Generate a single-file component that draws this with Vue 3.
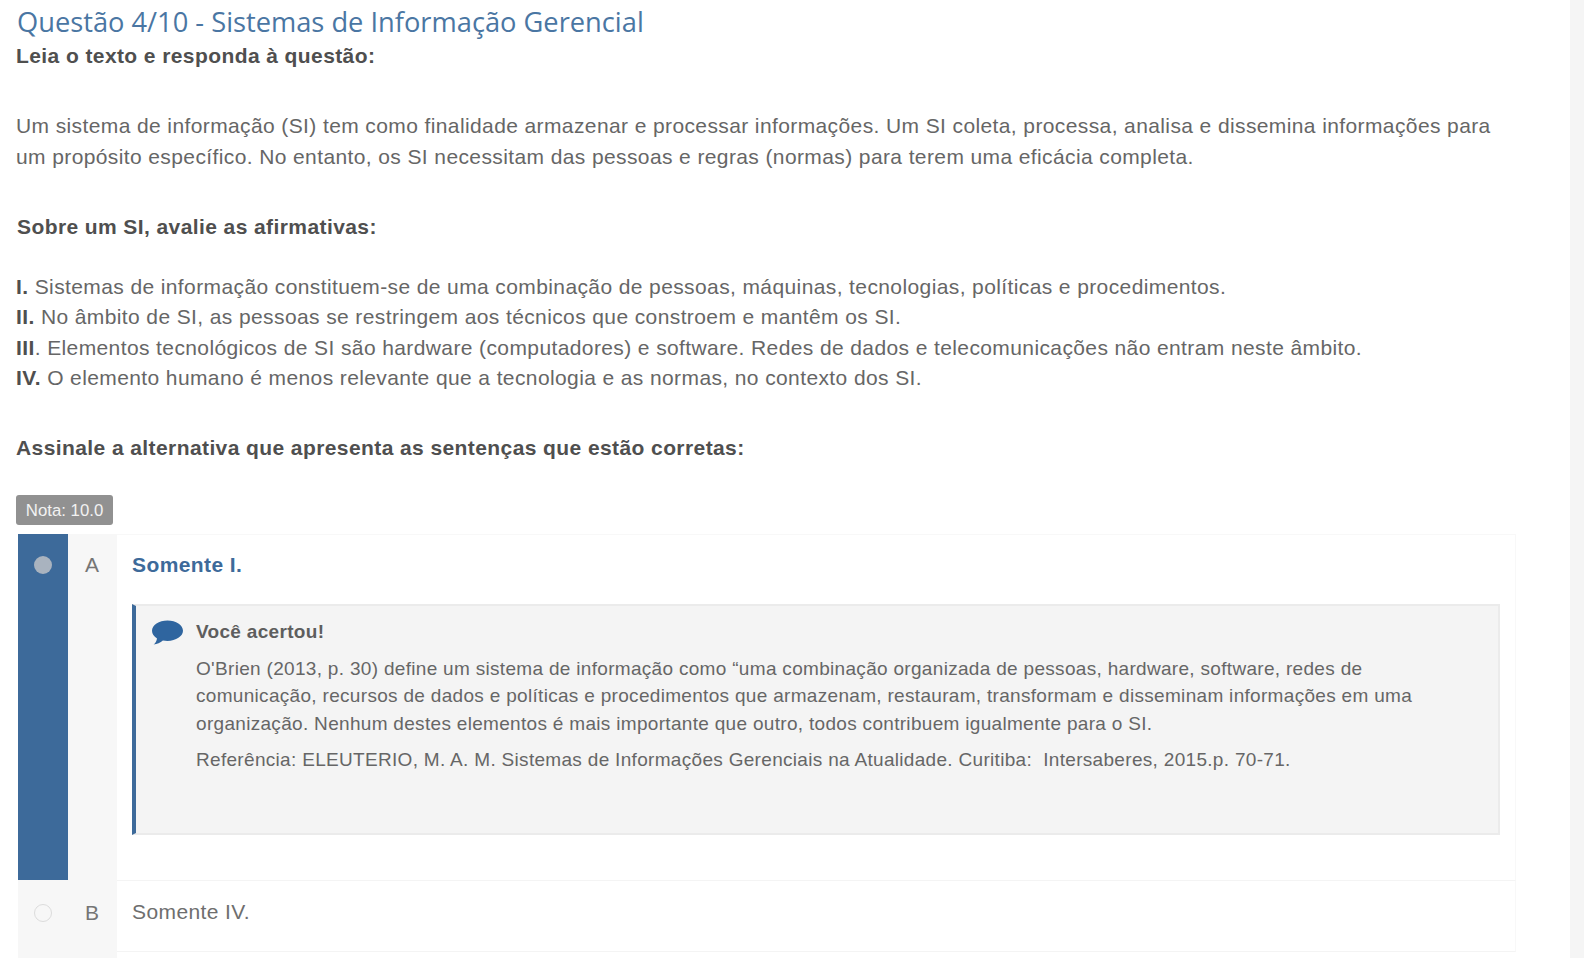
<template>
  <div class="page">
    <main class="content">
      <h1 class="title">Questão 4/10 - Sistemas de Informação Gerencial</h1>
      <div class="question">
        <p class="strong lead">Leia o texto e responda à questão:</p>
        <p class="intro">Um sistema de informação (SI) tem como finalidade armazenar e processar informações. Um SI coleta, processa, analisa e dissemina informações para<br />um propósito específico. No entanto, os SI necessitam das pessoas e regras (normas) para terem uma eficácia completa.</p>
        <p class="strong about">Sobre um SI, avalie as afirmativas:</p>
        <p class="claims">
          <template v-for="c in claims" :key="c.n">
            <b>{{ c.n }}</b>{{ c.t }}<br />
          </template>
        </p>
        <p class="strong ask">Assinale a alternativa que apresenta as sentenças que estão corretas:</p>
      </div>
      <span class="badge">Nota: 10.0</span>
      <div class="options">
        <div class="row selected">
          <div class="mark"><i class="radio"></i></div>
          <div class="letter">A</div>
          <div class="body">
            <div class="answer">Somente I.</div>
            <div class="comment">
              <svg class="bubble" viewBox="0 0 32 26" aria-hidden="true"><path d="M16.5 .5C8 .5 1 5 1 10.8c0 3 1.9 5.7 5 7.6-.3 2.300-1.700 4.700-3.400 6.100 3.400-.3 6.800-1.800 9.300-3.900 1.400.2 3 .3 4.600.3 8.500 0 15.500-4.600 15.500-10.100S25 .5 16.500 .5z"/></svg>
              <div class="comment-text">
                <div class="hit">Você acertou!</div>
                <p class="why">O'Brien (2013, p. 30) define um sistema de informação como “uma combinação organizada de pessoas, hardware, software, redes de<br />comunicação, recursos de dados e políticas e procedimentos que armazenam, restauram, transformam e disseminam informações em uma<br />organização. Nenhum destes elementos é mais importante que outro, todos contribuem igualmente para o SI.</p>
                <p class="ref">Referência: ELEUTERIO, M. A. M. Sistemas de Informações Gerenciais na Atualidade. Curitiba:&nbsp; Intersaberes, 2015.p. 70-71.</p>
              </div>
            </div>
          </div>
        </div>
        <div class="row">
          <div class="mark"><i class="radio"></i></div>
          <div class="letter">B</div>
          <div class="body"><div class="answer plain">Somente IV.</div></div>
        </div>
      </div>
    </main>
    <aside class="rail"></aside>
  </div>
</template>

<script setup>
const claims = [
  { n: 'I.', t: ' Sistemas de informação constituem-se de uma combinação de pessoas, máquinas, tecnologias, políticas e procedimentos.' },
  { n: 'II.', t: ' No âmbito de SI, as pessoas se restringem aos técnicos que constroem e mantêm os SI.' },
  { n: 'III', t: '. Elementos tecnológicos de SI são hardware (computadores) e software. Redes de dados e telecomunicações não entram neste âmbito.' },
  { n: 'IV.', t: ' O elemento humano é menos relevante que a tecnologia e as normas, no contexto dos SI.' }
]
</script>

<style>
html, body { margin: 0; background: #fff; overflow: hidden; }
</style>

<style scoped>
.page { display: flex; height: 958px; overflow: hidden; font-family: "Liberation Sans", Arial, sans-serif; color: #666; }
.content { width: 1570px; box-sizing: border-box; padding: 0 54px 0 16px; flex: none; }
.rail { flex: 1; background: #f5f5f5; }
.title { margin: 0 0 0 1px; font: 400 27.25px/44px "Open Sans", sans-serif; color: #4a76a3; height: 41px; }
p { margin: 0; }
.question { font-size: 21px; line-height: 30.3px; letter-spacing: .39px; white-space: nowrap; }
.strong { font-weight: 700; color: #4f4f4f; letter-spacing: .41px; }
.lead { margin-bottom: 40px; }
.about { margin-top: 40px; padding-left: 1px; }
.claims { margin-top: 30px; }
.claims b { color: #4f4f4f; }
.ask { margin-top: 40px; }
.badge { display: block; width: 97px; height: 30px; margin-top: 31px; background: #919191; border-radius: 3px; color: #f2f2f2; font-size: 16.8px; line-height: 31px; text-align: center; }
.options { margin-top: 9px; margin-left: 2px; }
.row { display: grid; grid-template-columns: 50px 49px 1fr; }
.row + .row .body { height: 70px; border-bottom: 1px solid #f4f4f4; border-top: 1px solid #f4f4f4; box-sizing: content-box; margin-bottom: 6px; }
.mark { background: #f7f7f7; display: flex; justify-content: center; align-items: flex-start; padding-top: 22px; }
.selected .mark { background: #3d6a9a; }
.row + .row .mark { padding-top: 24px; }
.radio { width: 18px; height: 18px; border-radius: 50%; box-sizing: border-box; border: 1px solid #dcdcdc; background: #f7f7f7; }
.selected .radio { background: #a9b3bf; border: none; }
.letter { background: #f7f7f7; text-align: center; font-size: 21px; line-height: 62px; color: #757575; padding-right: 1px; }
.row + .row .letter { line-height: 66px; }
.body { border-right: 1px solid #f8f8f8; padding-right: 15px; min-width: 0; }
.selected .body { height: 346px; border-top: 1px solid #f8f8f8; box-sizing: border-box; }
.answer { font-size: 21px; font-weight: 700; line-height: 60px; color: #3d6a9a; padding-left: 15px; letter-spacing: .4px; }
.answer.plain { font-weight: 400; color: #6e6e6e; line-height: 62px; }
.comment { display: flex; height: 231px; box-sizing: border-box; margin: 9px 0 0 15px; background: #f4f4f4; border-left: 4px solid #3d6a9a; border-right: 2px solid #ebebeb; border-bottom: 2px solid #ebebeb; border-top: 2px solid #ebebeb; padding: 13px 0 0 15px; }
.bubble { width: 32px; height: 26px; fill: #2f659f; flex: none; margin-top: 1px; }
.comment-text { margin-left: 13px; font-size: 19px; line-height: 27.5px; letter-spacing: .31px; white-space: nowrap; color: #666; }
.hit { font-weight: 700; height: 37px; line-height: 25px; color: #5e5e5e; margin-bottom: -1px; }
.ref { margin-top: 9px; }
</style>
